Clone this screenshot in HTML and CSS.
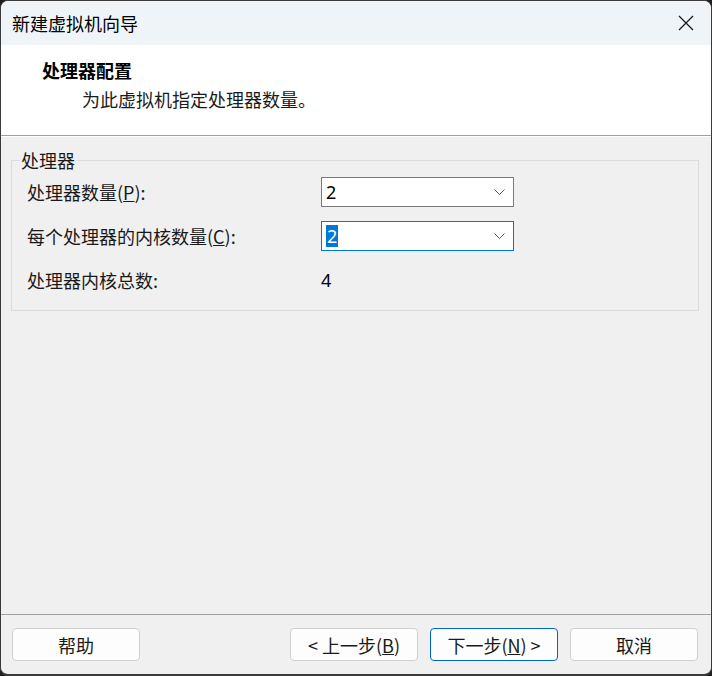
FILE: index.html
```html
<!DOCTYPE html>
<html lang="zh-CN">
<head>
<meta charset="utf-8">
<title>新建虚拟机向导</title>
<link rel="stylesheet" href="styles.css">
</head>
<body>
<div class="window">
  <div class="titlebar">
    <span class="title">新建虚拟机向导</span>
    <span class="close">
      <svg width="16" height="16" viewBox="0 0 16 16"><path d="M1 1 L15 15 M15 1 L1 15" stroke="#1a1a1a" stroke-width="1.3" fill="none"/></svg>
    </span>
  </div>
  <div class="header">
    <div class="h-title">处理器配置</div>
    <div class="h-sub">为此虚拟机指定处理器数量。</div>
  </div>
  <div class="body">
    <fieldset class="group">
      <legend class="legend">处理器</legend>
      <div class="row">
        <span class="label">处理器数量(<u>P</u>):</span>
        <div class="combo">
          <span class="val">2</span>
          <svg class="chev" width="11" height="6" viewBox="0 0 11 6"><path d="M0.5 0.5 L5.5 5.5 L10.5 0.5" stroke="#5a5a5a" stroke-width="1" fill="none"/></svg>
        </div>
      </div>
      <div class="row">
        <span class="label">每个处理器的内核数量(<u>C</u>):</span>
        <div class="combo focus">
          <span class="val sel">2</span>
          <svg class="chev" width="11" height="6" viewBox="0 0 11 6"><path d="M0.5 0.5 L5.5 5.5 L10.5 0.5" stroke="#5a5a5a" stroke-width="1" fill="none"/></svg>
        </div>
      </div>
      <div class="row last">
        <span class="label">处理器内核总数:</span>
        <span class="total">4</span>
      </div>
    </fieldset>
    <div class="spacer"></div>
    <div class="footer">
      <button class="btn">帮助</button>
      <div class="btn-group">
        <button class="btn">&lt; 上一步(<u>B</u>)</button>
        <button class="btn primary">下一步(<u>N</u>) &gt;</button>
        <button class="btn">取消</button>
      </div>
    </div>
  </div>
</div>
</body>
</html>
```
FILE: styles.css
```css
html, body {
  margin: 0;
  padding: 0;
  background: #1e1e1e;
}
body {
  font-family: "Noto Sans CJK SC", "Noto Sans", sans-serif;
  font-size: 18px;
  color: #1a1a1a;
}
.window {
  width: 712px;
  height: 676px;
  box-sizing: border-box;
  border: 1px solid #3a3a3a;
  border-bottom-width: 2px;
  border-radius: 8px;
  overflow: hidden;
  background: #f0f0f0;
  display: flex;
  flex-direction: column;
}
.titlebar {
  height: 44px;
  flex: none;
  background: #eff4f9;
  display: flex;
  align-items: center;
  justify-content: space-between;
  padding: 0 17px 0 11px;
}
.title {
  font-size: 18px;
  color: #000;
  line-height: 24px;
  margin-top: -1px;
}
.close {
  display: flex;
  margin-top: -1px;
}
.header {
  height: 91px;
  flex: none;
  background: #fff;
  border-bottom: 1px solid #a0a0a0;
  padding: 13px 0 0 41px;
  box-sizing: border-box;
}
.h-title {
  font-weight: bold;
  line-height: 24px;
  color: #000;
}
.h-sub {
  line-height: 24px;
  margin-top: 5px;
  padding-left: 40px;
  color: #1a1a1a;
}
.body {
  flex: 1;
  display: flex;
  flex-direction: column;
  padding: 11px 12px 0 10px;
  border-top: 1px solid #ffffff;
}
.group {
  margin: 0;
  border: 1px solid #dcdcdc;
  padding: 5px 15px 15px 15px;
  min-width: 0;
}
.legend {
  padding: 0 2px 0 1px;
  margin-left: -7px;
  line-height: 24px;
  color: #1a1a1a;
}
.row {
  display: flex;
  align-items: center;
  height: 30px;
  margin-bottom: 14px;
}
.row.last {
  margin-bottom: 0;
  margin-top: 2px;
}
.label {
  width: 294px;
  flex: none;
  line-height: 24px;
}
.combo {
  width: 193px;
  height: 30px;
  box-sizing: border-box;
  border: 1px solid #7a7a7a;
  background: #fff;
  display: flex;
  align-items: center;
  justify-content: space-between;
  padding: 0 8px 0 4px;
}
.combo.focus {
  border-color: #0078d7;
}
.val {
  font-family: "Noto Sans", sans-serif;
  font-size: 18px;
  line-height: 22px;
  color: #000;
}
.val.sel {
  background: #0078d7;
  color: #fff;
  padding: 0 1px;
}
.chev {
  display: block;
}
.total {
  font-family: "Noto Sans", sans-serif;
  font-size: 18px;
  color: #000;
}
.spacer {
  flex: 1;
}
.footer {
  flex: none;
  margin: 0 -12px 0 -10px;
  border-top: 1px solid #a0a0a0;
  padding: 13px 13px 13px 11px;
  display: flex;
  justify-content: space-between;
}
.btn-group {
  display: flex;
  gap: 12px;
}
.btn {
  width: 128px;
  height: 33px;
  box-sizing: border-box;
  border: 1px solid #d0d0d0;
  border-radius: 4px;
  background: #fdfdfd;
  font-family: "Noto Sans CJK SC", "Noto Sans", sans-serif;
  font-size: 18px;
  color: #1a1a1a;
  padding: 0;
  line-height: 24px;
}
.btn.primary {
  border-color: #0067c0;
}
```
